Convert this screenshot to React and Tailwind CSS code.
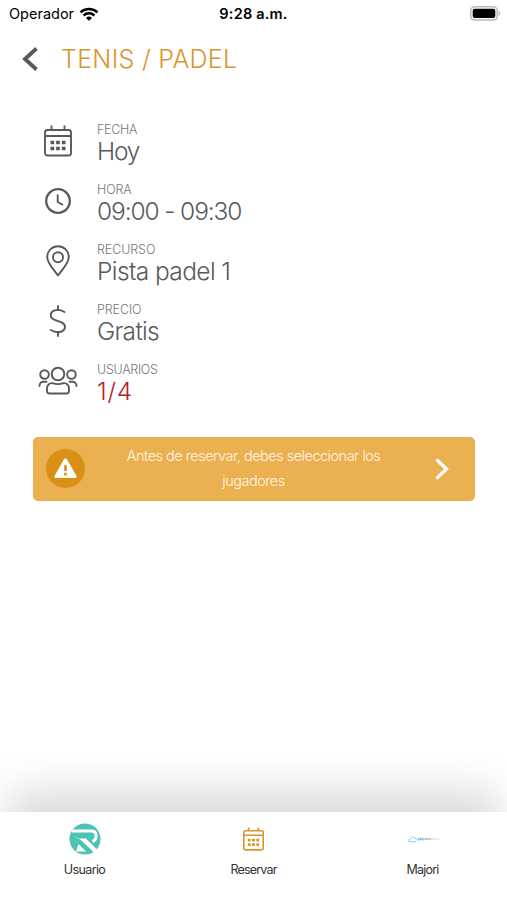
const CalendarIcon = ({ className, strokeWidth = 1.9 }) => (
  <svg viewBox="0 0 28 32" className={className} fill="none" stroke="currentColor" strokeWidth={strokeWidth}>
    <rect x="1" y="5" width="26" height="25.5" rx="2.5" />
    <path d="M1 11h26M7.500 0.500v4.500M20.500 .5v4.500" />
    <path
      d="M6.500 17.500h3.700M12.150 17.500h3.700M17.800 17.500h3.700M6.500 23.500h3.700M12.150 23.500h3.700M17.800 23.500h3.700"
      strokeWidth="3.7"
    />
  </svg>
)

const ClockIcon = () => (
  <svg viewBox="0 0 26 26" className="size-[26px]" fill="none" stroke="currentColor">
    <circle cx="13" cy="13" r="11.800" strokeWidth="2.300" />
    <path d="M12.700 6.500V14L18 17" strokeWidth="1.900" />
  </svg>
)

const PinIcon = () => (
  <svg viewBox="0 0 24 32" className="h-8 w-6" fill="none" stroke="currentColor" strokeWidth="1.900">
    <path d="M12 30.500C10 27.500 1.200 18.500 1.200 12a10.800 10.800 0 0 1 21.600 0c0 6.500-8.800 15.500-10.800 18.500z" strokeLinejoin="round" />
    <circle cx="12" cy="12.300" r="5" />
  </svg>
)

const DollarIcon = () => (
  <svg viewBox="0 0 18 32" className="h-8 w-[18px]" fill="none" stroke="currentColor" strokeWidth="1.900" strokeLinecap="round">
    <path d="M9 1v4M9 27v4" />
    <path d="M15.500 7C12 4.800 8 4.500 5 5.700 1 7.300.6 12.500 4.500 14.300l8 3c5 2.200 4.300 7.500.2 9.200C9 27.800 5 27 1.800 25" />
  </svg>
)

const UsersIcon = () => (
  <svg viewBox="0 0 40 30" className="h-[30px] w-10" fill="none" stroke="currentColor" strokeWidth="1.900" strokeLinecap="round">
    <circle cx="20" cy="8" r="6.300" />
    <circle cx="6.500" cy="8.500" r="4.300" />
    <circle cx="33.500" cy="8.500" r="4.300" />
    <path d="M1.500 20c0-3 2-4.500 4.500-4.300h2.500M38.500 20c0-3-2-4.500-4.500-4.300h-2.500" />
    <path d="M14.500 17.200c3.500 1.200 7.500 1.200 11 0 3.200-.3 5.500 2 5.500 5V25c0 1.600-1 2.500-2.500 2.500h-17c-1.500 0-2.500-.9-2.500-2.500v-2.800c0-3 2.300-5.300 5.500-5z" />
  </svg>
)

const WifiIcon = () => (
  <svg viewBox="0 0 20 14" className="h-[14px] w-5" fill="none" stroke="black" strokeWidth="2.500">
    <path d="M1.500 5.300a12.400 12.400 0 0 1 17 0M4.600 8.500a7.900 7.900 0 0 1 10.800 0" />
    <path d="M10 13.800 7 10.900a4.400 4.400 0 0 1 6 0z" fill="black" stroke="none" />
  </svg>
)

const BatteryIcon = () => (
  <svg viewBox="0 0 31 15" className="-mt-px h-[15px] w-[31px]">
    <rect x=".8" y=".8" width="26.400" height="13.200" rx="3.800" fill="white" stroke="#b9b9b9" strokeWidth="1.500" />
    <rect x="2.700" y="2.700" width="22.600" height="9.400" rx="2" fill="black" />
    <path d="M28.500 5v5c2.300-.8 2.300-4.200 0-5z" fill="#b9b9b9" />
  </svg>
)

const UserLogo = () => (
  <svg viewBox="0 0 32 32" className="size-8">
    <circle cx="16" cy="16" r="15.500" fill="#4cc3b3" />
    <path
      d="M3 8h19.500c6 0 6 8.500 1 10.500"
      fill="none"
      stroke="white"
      strokeWidth="3"
    />
    <path d="M5.500 12.700 8.500 15.500h8.500L28.500 27l-3 3L12.500 17.500z" fill="white" />
    <path d="M9.500 21 17 28.500H7z" fill="white" />
  </svg>
)

const CloudLogo = () => (
  <svg viewBox="0 0 32 8" className="h-2 w-8">
    <path d="M1.500 6.500c-1-1 0-2 1.500-2C4 1.500 7 1 8 3.500c1.500-.4 2 .8 3.500 2.500M1.500 6.700H9" fill="none" stroke="#62bdf0" strokeWidth=".8" />
    <path d="M11 4h6.500" stroke="#7cc4e4" strokeWidth="2.400" strokeDasharray="1.700 .3" />
    <path d="M18 4h6" stroke="#b4bcc0" strokeWidth="2" strokeDasharray="1.300 .4" />
    <path d="M24.500 4H32" stroke="#cbcbcb" strokeWidth="1.200" strokeDasharray="1.500 .5" />
  </svg>
)

const rows = [
  { label: 'FECHA', value: 'Hoy', icon: <CalendarIcon className="h-8 w-7" />, labelStyle: 'tracking-[-0.3px]', valueStyle: 'tracking-[-1.2px]' },
  { label: 'HORA', value: '09:00 - 09:30', icon: <ClockIcon />, labelStyle: 'tracking-[-0.1px]', valueStyle: 'tracking-[-1.1px]' },
  { label: 'RECURSO', value: 'Pista padel 1', icon: <PinIcon />, labelStyle: 'tracking-[-0.1px]', valueStyle: 'tracking-[-0.6px]' },
  { label: 'PRECIO', value: 'Gratis', icon: <DollarIcon />, labelStyle: 'tracking-[-0.1px]', valueStyle: 'tracking-[-0.7px]' },
  { label: 'USUARIOS', value: '1/4', icon: <UsersIcon />, labelStyle: 'tracking-[-0.3px]', valueStyle: 'tracking-[0.8px] text-[#b92025]' },
]

const tabs = [
  { label: 'Usuario', icon: <UserLogo />, labelStyle: 'tracking-[-0.6px]' },
  { label: 'Reservar', icon: <CalendarIcon className="h-6 w-[21px] text-[#d9952b]" strokeWidth={2.2} />, labelStyle: 'tracking-[-0.8px]' },
  { label: 'Majori', icon: <CloudLogo />, labelStyle: 'tracking-[-0.8px]' },
]

export default function App() {
  return (
    <div className="flex h-[900px] w-[507px] flex-col overflow-hidden bg-white font-['Inter',sans-serif] text-[#58595b]">
      <div className="grid h-7 grid-cols-3 items-center pr-[6px] pl-[9px] text-black">
        <div className="flex items-center gap-[5px] text-[14.500px]">
          <span>Operador</span>
          <WifiIcon />
        </div>
        <span className="pr-[3px] text-center text-[14.500px] font-semibold tracking-[0.2px]">9:28 a.m.</span>
        <div className="flex justify-end">
          <BatteryIcon />
        </div>
      </div>

      <header className="flex h-16 items-center pl-[22px]">
        <svg viewBox="0 0 16 24" className="-mt-[2px] h-6 w-4" fill="none" stroke="currentColor" strokeWidth="3.800">
          <path d="M14.500 1.500 3 12l11.500 10.500" />
        </svg>
        <h1 className="ml-[23px] text-[25px] font-light tracking-[0.300px] text-[#d9952b]">TENIS / PADEL</h1>
      </header>

      <main className="flex-1 pt-[19px]">
        {rows.map((row) => (
          <div key={row.label} className="flex h-[60px] items-center pl-[38px]">
            <div className="flex w-10 justify-center">{row.icon}</div>
            <div className="ml-[19px] font-light">
              <div className={`mt-[2px] text-[12.500px] leading-[18px] text-[#77787b] ${row.labelStyle}`}>{row.label}</div>
              <div className={`-mt-px text-[24.500px] leading-[26px] ${row.valueStyle}`}>{row.value}</div>
            </div>
          </div>
        ))}

        <div className="mt-[25.500px] mr-8 ml-[33px] flex h-16 items-center rounded-[5px] bg-[#ebb050] pr-[26px] pl-[13px] text-white">
          <div className="flex size-[39px] items-center justify-center rounded-full bg-[#d99016]">
            <svg viewBox="0 0 24 22" className="h-[21px] w-[23px]">
              <path d="M10.300 1.500c.8-1.300 2.600-1.300 3.400 0l9.600 17c.7 1.300 0 2.500-1.500 2.500H2.200C.7 21 0 19.800.7 18.500z" fill="white" />
              <path d="M12 7.500v6M12 15.500v2.800" stroke="#d99016" strokeWidth="2.800" />
            </svg>
          </div>
          <p className="-mt-[2px] flex-1 pr-10 pl-[27px] text-center text-[14.500px] leading-[25px] font-light tracking-[-0.5px] text-[#fff6e8]">
            Antes de reservar, debes seleccionar los jugadores
          </p>
          <svg viewBox="0 0 14 22" className="h-[22px] w-[14px]" fill="none" stroke="white" strokeWidth="3.300">
            <path d="M1.500 1.500 11.500 11 1.500 20.500" />
          </svg>
        </div>
      </main>

      <nav className="grid h-[88px] grid-cols-3 bg-white text-[12.500px] text-[#333] shadow-[0_-30px_42px_-9px_rgba(0,0,0,0.150)]">
        {tabs.map((tab) => (
          <div key={tab.label} className="flex flex-col items-center pt-[11px]">
            <div className="flex h-8 items-center">{tab.icon}</div>
            <span className={`mt-[6px] leading-[18px] ${tab.labelStyle}`}>{tab.label}</span>
          </div>
        ))}
      </nav>
    </div>
  )
}
